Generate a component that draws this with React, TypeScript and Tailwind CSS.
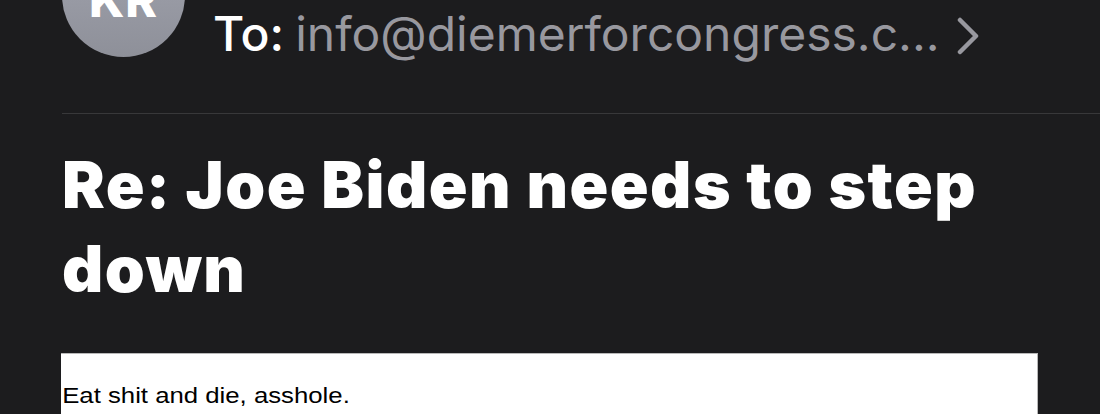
import React from "react";

export default function App() {
  return (
    <div className="w-[1100px] h-[414px] overflow-hidden bg-[#1c1c1e] pl-[62px]" style={{ fontFamily: "Inter, 'Noto Sans', sans-serif" }}>
      <div className="flex items-start">
        <div className="-mt-[66px] w-[123px] h-[123px] shrink-0 rounded-full bg-gradient-to-b from-[#a3a5b0] to-[#8e9099] flex items-center justify-center pt-[8px]">
          <span className="text-white text-[48px] font-extrabold leading-none tracking-[1px]">KR</span>
        </div>
        <div className="ml-[28px] mt-[10px] flex items-center text-[48px] leading-[48px] whitespace-nowrap">
          <span className="text-white font-medium">To:</span>
          <span className="ml-[11px] text-[#98989f] font-normal">info@diemerforcongress.c...</span>
          <svg className="ml-[17px] mt-[4px]" width="22" height="38" viewBox="0 0 22 38" fill="none">
            <polyline points="3,3 19,19 3,35" stroke="#98989f" strokeWidth="4.5" strokeLinecap="round" strokeLinejoin="round" />
          </svg>
        </div>
      </div>
      <div className="mt-[55px] h-px bg-[#38383a]" />
      <h1 className="mt-[29px] text-white text-[64px] leading-[84px] font-black tracking-[1.5px]">
        Re: Joe Biden needs to step
        <br />
        down
      </h1>
      <div className="mt-[42px] w-[977px] h-[80px] -ml-px bg-white border-r border-t border-[#b8b8b8] pt-[29px]">
        <p className="text-black text-[22px] leading-[25px] pl-[1px] origin-left scale-x-[1.17]" style={{ fontFamily: "'Liberation Sans', Arial, sans-serif" }}>
          Eat shit and die, asshole.
        </p>
      </div>
    </div>
  );
}
